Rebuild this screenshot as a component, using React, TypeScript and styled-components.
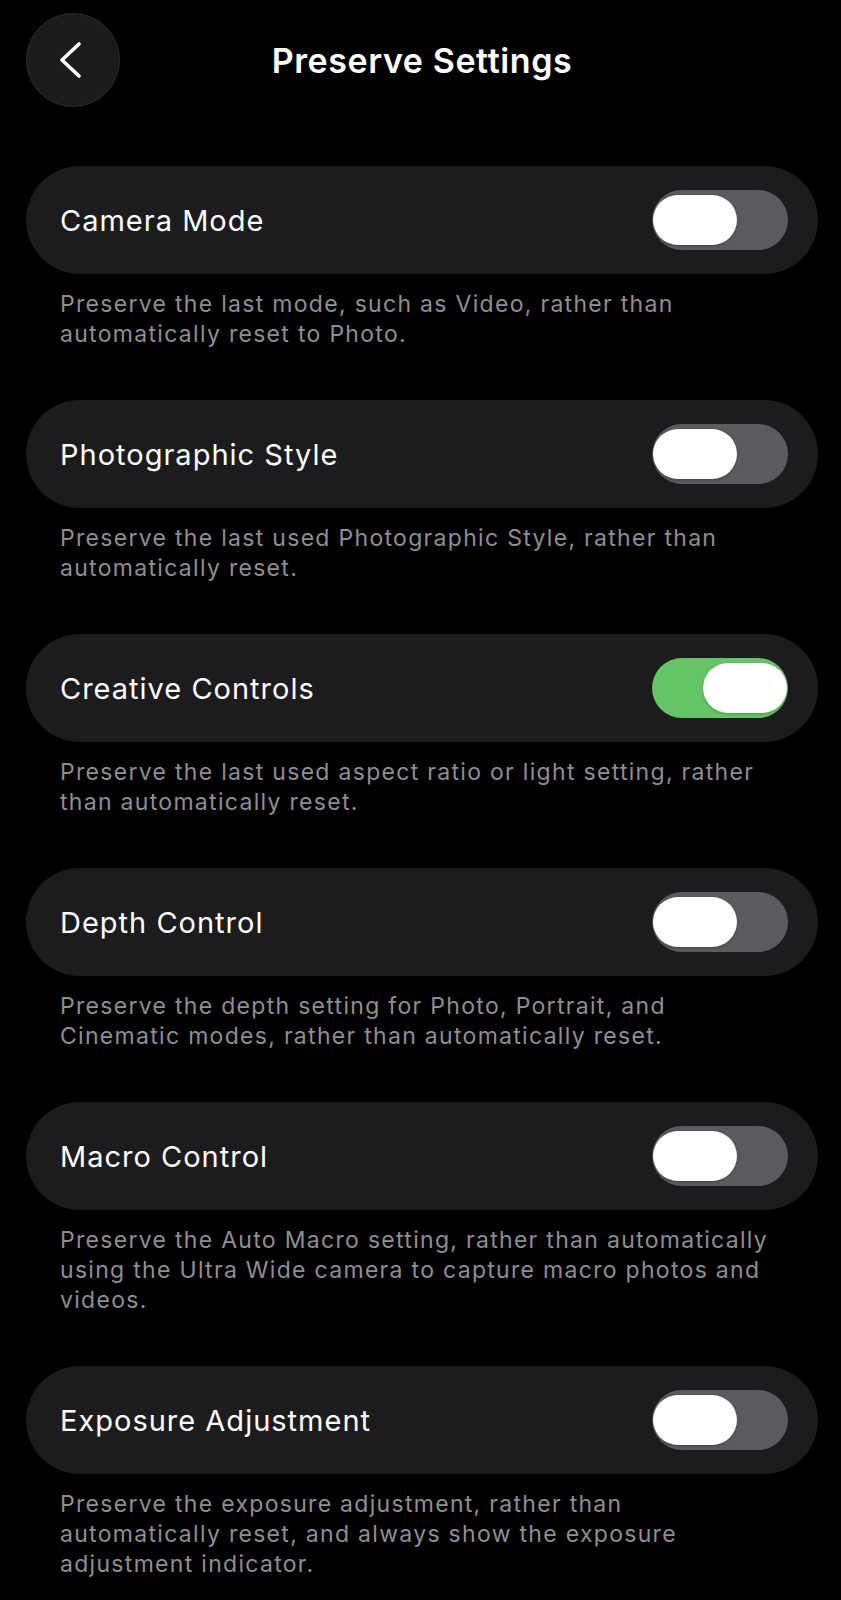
import React, { useState } from 'react';
import styled, { createGlobalStyle } from 'styled-components';

const GlobalStyle = createGlobalStyle`
  html, body {
    margin: 0;
    padding: 0;
    background: #000;
  }
  body {
    font-family: Inter, "Noto Sans", "Liberation Sans", sans-serif;
    -webkit-font-smoothing: antialiased;
  }
`;

type Setting = {
  id: string;
  title: string;
  note: string;
  on: boolean;
};

const SETTINGS: Setting[] = [
  {
    id: 'mode',
    title: 'Camera Mode',
    note: 'Preserve the last mode, such as Video, rather than automatically reset to Photo.',
    on: false,
  },
  {
    id: 'style',
    title: 'Photographic Style',
    note: 'Preserve the last used Photographic Style, rather than automatically reset.',
    on: false,
  },
  {
    id: 'creative',
    title: 'Creative Controls',
    note: 'Preserve the last used aspect ratio or light setting, rather than automatically reset.',
    on: true,
  },
  {
    id: 'depth',
    title: 'Depth Control',
    note: 'Preserve the depth setting for Photo, Portrait, and Cinematic modes, rather than automatically reset.',
    on: false,
  },
  {
    id: 'macro',
    title: 'Macro Control',
    note: 'Preserve the Auto Macro setting, rather than automatically using the Ultra Wide camera to capture macro photos and videos.',
    on: false,
  },
  {
    id: 'exposure',
    title: 'Exposure Adjustment',
    note: 'Preserve the exposure adjustment, rather than automatically reset, and always show the exposure adjustment indicator.',
    on: false,
  },
];

const Page = styled.div`
  width: 841px;
  min-height: 1600px;
  box-sizing: border-box;
  padding: 13px 23px 0 26px;
  background: #000;
  color: #fff;
`;

const Header = styled.header`
  display: grid;
  grid-template-columns: 94px 1fr 94px;
  align-items: center;
  height: 94px;
  margin-bottom: 59px;
`;

const BackButton = styled.button`
  width: 94px;
  height: 94px;
  border-radius: 50%;
  border: 1px solid #2a2a2c;
  background: #1b1b1d;
  display: flex;
  align-items: center;
  justify-content: center;
  padding: 0 4px 0 0;
  cursor: pointer;
`;

const Title = styled.h1`
  margin: 0;
  text-align: center;
  font-size: 34px;
  font-weight: 600;
  letter-spacing: 0.6px;
  color: #fff;
`;

const List = styled.div`
  display: flex;
  flex-direction: column;
  gap: 51px;
`;

const Section = styled.section`
  display: flex;
  flex-direction: column;
`;

const Card = styled.div`
  height: 108px;
  box-sizing: border-box;
  border-radius: 54px;
  background: #1c1c1e;
  display: flex;
  align-items: center;
  justify-content: space-between;
  padding: 0 30px 0 34px;
`;

const Label = styled.span`
  font-size: 29px;
  font-weight: 400;
  letter-spacing: 1px;
  color: #fff;
`;

const Note = styled.p`
  margin: 15px 0 0;
  padding: 0 40px 0 34px;
  font-size: 23px;
  line-height: 30px;
  letter-spacing: 1.3px;
  color: #8e8e93;
`;

const Track = styled.button<{ $on: boolean }>`
  position: relative;
  width: 136px;
  height: 60px;
  border: none;
  padding: 0;
  border-radius: 30px;
  background: ${(p) => (p.$on ? '#65c466' : '#5b5b5f')};
  cursor: pointer;
  flex-shrink: 0;
`;

const Knob = styled.span<{ $on: boolean }>`
  position: absolute;
  top: 5px;
  left: ${(p) => (p.$on ? '51px' : '1px')};
  width: 84px;
  height: 50px;
  border-radius: 25px;
  background: #fff;
  box-shadow: 0 1px 3px rgba(0, 0, 0, 0.25);
  transition: left 0.2s ease;
`;

const Chevron = () => (
  <svg width="26" height="38" viewBox="0 0 26 38" fill="none">
    <path
      d="M21 3 L4 19 L21 35"
      stroke="#fff"
      strokeWidth="3.6"
      strokeLinecap="round"
      strokeLinejoin="round"
    />
  </svg>
);

const Toggle = ({ on, onChange }: { on: boolean; onChange: () => void }) => (
  <Track $on={on} onClick={onChange} aria-pressed={on}>
    <Knob $on={on} />
  </Track>
);

const App = () => {
  const [values, setValues] = useState<Record<string, boolean>>(() =>
    Object.fromEntries(SETTINGS.map((s) => [s.id, s.on]))
  );

  return (
    <Page>
      <GlobalStyle />
      <Header>
        <BackButton aria-label="Back">
          <Chevron />
        </BackButton>
        <Title>Preserve Settings</Title>
        <span />
      </Header>
      <List>
        {SETTINGS.map((s) => (
          <Section key={s.id}>
            <Card>
              <Label>{s.title}</Label>
              <Toggle
                on={values[s.id]}
                onChange={() => setValues((v) => ({ ...v, [s.id]: !v[s.id] }))}
              />
            </Card>
            <Note>{s.note}</Note>
          </Section>
        ))}
      </List>
    </Page>
  );
};

export default App;
